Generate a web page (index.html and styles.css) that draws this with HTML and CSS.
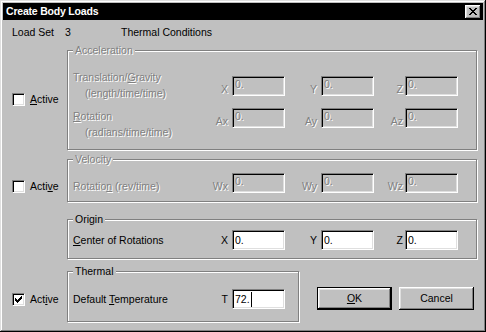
FILE: index.html
```html
<!DOCTYPE html>
<html lang="en">
<head>
    <meta charset="UTF-8" />
    <meta name="viewport" content="width=device-width, initial-scale=1" />
    <title>Create Body Loads</title>
    <link rel="stylesheet" href="styles.css">
</head>
<body>
    <div class="window">
        <div class="titlebar">
            <span class="title">Create Body Loads</span>
            <span class="close-btn">
                <svg width="8" height="7" viewBox="0 0 8 7"><path fill="#000" d="M0 0h2v1H0zM6 0h2v1H6zM1 1h2v1H1zM5 1h2v1H5zM2 2h4v1H2zM3 3h2v1H3zM2 4h4v1H2zM1 5h2v1H1zM5 5h2v1H5zM0 6h2v1H0zM6 6h2v1H6z"/></svg>
            </span>
        </div>

        <div class="client">
            <div class="loadset">
                <span class="ls-label">Load Set</span>
                <span class="ls-num">3</span>
                <span>Thermal Conditions</span>
            </div>

            <!-- Acceleration -->
            <div class="row row--accel">
                <label class="check check--accel"><span class="box"></span><span class="check-text"><u>A</u>ctive</span></label>
                <div class="group group--off group--accel">
                    <span class="group-title">Acceleration</span>
                    <div class="line">
                        <div class="desc">Translation/<u>G</u>ravity<span class="sub">(length/time/time)</span></div>
                        <div class="field field--x field--drop"><span class="axis">X</span><span class="edit">0.</span></div>
                        <div class="field field--y field--drop"><span class="axis">Y</span><span class="edit">0.</span></div>
                        <div class="field field--z field--drop"><span class="axis">Z</span><span class="edit">0.</span></div>
                    </div>
                    <div class="line line--gap">
                        <div class="desc"><u>R</u>otation<span class="sub">(radians/time/time)</span></div>
                        <div class="field field--x"><span class="axis">Ax</span><span class="edit">0.</span></div>
                        <div class="field field--y"><span class="axis">Ay</span><span class="edit">0.</span></div>
                        <div class="field field--z"><span class="axis">Az</span><span class="edit">0.</span></div>
                    </div>
                </div>
            </div>

            <!-- Velocity -->
            <div class="row row--vel">
                <label class="check check--vel"><span class="box"></span><span class="check-text">Acti<u>v</u>e</span></label>
                <div class="group group--off group--vel">
                    <span class="group-title">Velocity</span>
                    <div class="line line--end">
                        <div class="desc">Rotatio<u>n</u> (rev/time)</div>
                        <div class="field field--x"><span class="axis">Wx</span><span class="edit">0.</span></div>
                        <div class="field field--y"><span class="axis">Wy</span><span class="edit">0.</span></div>
                        <div class="field field--z"><span class="axis">Wz</span><span class="edit">0.</span></div>
                    </div>
                </div>
            </div>

            <!-- Origin -->
            <div class="row row--origin">
                <div class="spacer"></div>
                <div class="group group--origin">
                    <span class="group-title">Origin</span>
                    <div class="line line--center">
                        <div class="desc"><u>C</u>enter of Rotations</div>
                        <div class="field field--x field--mid"><span class="axis">X</span><span class="edit edit--on">0.</span></div>
                        <div class="field field--y field--mid"><span class="axis">Y</span><span class="edit edit--on">0.</span></div>
                        <div class="field field--z field--mid"><span class="axis">Z</span><span class="edit edit--on">0.</span></div>
                    </div>
                </div>
            </div>

            <!-- Thermal -->
            <div class="row row--thermal">
                <label class="check check--thermal">
                    <span class="box">
                        <svg width="7" height="7" viewBox="0 0 7 7"><path fill="#000" d="M6 0h1v1H6zM5 1h2v1H5zM0 2h1v1H0zM4 2h3v1H4zM0 3h2v1H0zM3 3h3v1H3zM0 4h5v1H0zM1 5h3v1H1zM2 6h1v1H2z"/></svg>
                    </span>
                    <span class="check-text">Act<u>i</u>ve</span>
                </label>
                <div class="group group--thermal">
                    <span class="group-title">Thermal</span>
                    <div class="line line--center">
                        <div class="desc">Default <u>T</u>emperature</div>
                        <div class="field field--x field--mid"><span class="axis">T</span><span class="edit edit--on">72.<span class="caret"></span></span></div>
                    </div>
                </div>
                <div class="buttons">
                    <span class="btn btn--default"><u>O</u>K</span>
                    <span class="btn">Cancel</span>
                </div>
            </div>
        </div>
    </div>
</body>
</html>
```

FILE: styles.css
```css
body {
    margin: 0;
    font-family: "Liberation Sans", Arial, sans-serif;
    font-size: 10.5px;
    color: #000;
    background: #c0c0c0;
}

.window {
    width: 486px;
    height: 332px;
    box-sizing: border-box;
    padding: 3px;
    background: #c0c0c0;
    box-shadow: inset -1px -1px #000, inset 1px 1px #dfdfdf,
                inset -2px -2px #808080, inset 2px 2px #fff;
}

.titlebar {
    height: 17px;
    background: #000;
    color: #fff;
    display: flex;
    align-items: center;
    justify-content: space-between;
    padding-left: 3px;
}

.title {
    font-weight: bold;
    font-size: 10.5px;
    letter-spacing: -0.2px;
    line-height: 17px;
}

.close-btn {
    width: 16px;
    height: 14px;
    margin-right: 2px;
    box-sizing: border-box;
    background: #c0c0c0;
    box-shadow: inset -1px -1px #000, inset 1px 1px #fff,
                inset -2px -2px #808080, inset 2px 2px #dfdfdf;
    display: flex;
    align-items: center;
    justify-content: center;
}

.client {
    padding-top: 6px;
}

.loadset {
    display: flex;
    line-height: 13px;
    padding-left: 9px;
}

.ls-label { width: 53px; }
.ls-num { width: 56px; }

/* rows */
.row {
    display: flex;
    align-items: flex-start;
}
.row--accel { margin-top: 11px; }
.row--vel { margin-top: 9px; }
.row--origin { margin-top: 17px; }
.row--thermal { margin-top: 12px; }

.spacer,
.check {
    width: 64px;
    flex: none;
}

.check {
    display: flex;
    align-items: center;
    box-sizing: border-box;
    padding-left: 9px;
    line-height: 13px;
}
.check--accel { margin-top: 43px; }
.check--vel { margin-top: 21px; }
.check--thermal { margin-top: 22px; }

.box {
    width: 13px;
    height: 13px;
    box-sizing: border-box;
    background: #fff;
    border: 1px solid;
    border-color: #808080 #fff #fff #808080;
    box-shadow: inset 1px 1px #000, inset -1px -1px #dfdfdf;
    display: flex;
    align-items: center;
    justify-content: center;
}

.check-text { margin-left: 5px; }

/* etched group boxes */
.group {
    position: relative;
    width: 410px;
    box-sizing: border-box;
    border: 1px solid #808080;
    box-shadow: 1px 1px 0 #fff, inset 1px 1px 0 #fff;
    padding-left: 5px;
}
.group--accel { padding-top: 18px; padding-bottom: 9px; }
.group--vel { padding-top: 13px; padding-bottom: 8px; }
.group--origin { padding-top: 10px; padding-bottom: 8px; }
.group--thermal { width: 232px; padding-top: 17px; padding-bottom: 12px; }

.group-title {
    position: absolute;
    top: -7px;
    left: 5px;
    padding: 0 2px;
    line-height: 13px;
    background: #c0c0c0;
}

.group--off {
    color: #808080;
    text-shadow: 1px 1px 0 #fff;
}

.line {
    display: flex;
    align-items: flex-start;
}
.line--gap { margin-top: 7px; }
.line--end { align-items: flex-end; }
.line--center { align-items: center; }

.desc {
    width: 137px;
    flex: none;
    line-height: 16px;
}
.line--end .desc,
.line--center .desc { line-height: 13px; }

.sub {
    display: block;
    padding-left: 12px;
}

.field {
    display: flex;
    align-items: flex-end;
}
.field--drop { margin-top: 7px; }
.field--mid { align-items: center; }

.axis {
    line-height: 13px;
    text-align: right;
    box-sizing: border-box;
    padding-right: 4px;
}
.field--x .axis { width: 22px; }
.field--y .axis { width: 36px; }
.field--z .axis { width: 31px; padding-right: 2px; }

.edit {
    width: 53px;
    height: 20px;
    box-sizing: border-box;
    border: 1px solid;
    border-color: #808080 #fff #fff #808080;
    box-shadow: inset 1px 1px #000, inset -1px -1px #dfdfdf;
    padding-left: 2px;
    line-height: 14px;
    background: #c0c0c0;
    white-space: nowrap;
}

.edit--on {
    background: #fff;
    line-height: 18px;
}

.caret {
    display: inline-block;
    width: 1px;
    height: 15px;
    background: #000;
    vertical-align: -4px;
    margin-left: 1px;
}

/* buttons */
.buttons {
    display: flex;
    gap: 7px;
    margin-left: 18px;
    margin-top: 16px;
}

.btn {
    width: 75px;
    height: 23px;
    box-sizing: border-box;
    display: flex;
    align-items: center;
    justify-content: center;
    line-height: 13px;
    background: #c0c0c0;
    box-shadow: inset -1px -1px #000, inset 1px 1px #fff,
                inset -2px -2px #808080, inset 2px 2px #dfdfdf;
}

.btn--default {
    border: 1px solid #000;
}
```
